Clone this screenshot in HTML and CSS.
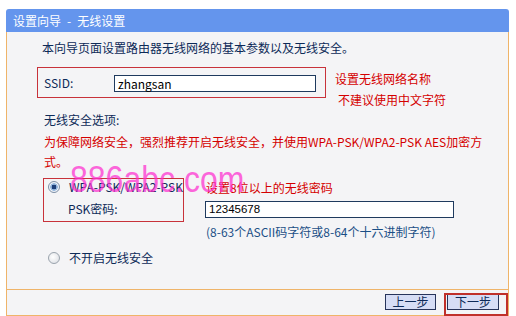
FILE: index.html
```html
<!DOCTYPE html>
<html lang="zh-CN">
<head>
<meta charset="utf-8">
<title>设置向导 - 无线设置</title>
<link rel="stylesheet" href="styles.css">
</head>
<body>
<div class="panel">
  <div class="title">设置向导<span class="dash">-</span>无线设置</div>
  <div class="frame">
    <div class="content">
      <p class="intro">本向导页面设置路由器无线网络的基本参数以及无线安全。</p>
      <div class="ssid-row">
        <div class="ssid-box">
          <span class="label">SSID:</span>
          <div class="input ssid-input">zhangsan</div>
        </div>
        <div class="notes">
          <div class="note">设置无线网络名称</div>
          <div class="note indent">不建议使用中文字符</div>
        </div>
      </div>
      <div class="section-title">无线安全选项:</div>
      <p class="warn">为保障网络安全，强烈推荐开启无线安全，并使用WPA-PSK/WPA2-PSK AES加密方<br>式。</p>
      <div class="wpa-row">
        <div class="wpa-box">
          <div class="opt"><span class="radio checked"></span><span>WPA-PSK/WPA2-PSK</span></div>
          <div class="psk-label">PSK密码:</div>
        </div>
        <div class="wpa-side">
          <div class="note side-note">设置8位以上的无线密码</div>
          <div class="input psk-input">12345678</div>
          <div class="hint">(8-63个ASCII码字符或8-64个十六进制字符)</div>
        </div>
        <div class="watermark">886abc.com</div>
      </div>
      <div class="opt off"><span class="radio"></span><span>不开启无线安全</span></div>
    </div>
    <div class="footer">
      <button class="btn">上一步</button>
      <button class="btn next">下一步</button>
      <div class="highlight"></div>
    </div>
  </div>
</div>
</body>
</html>
```
FILE: styles.css
```css
* { box-sizing: border-box; }
html, body {
  margin: 0;
  padding: 0;
  background: #ffffff;
}
body {
  font-family: "Noto Sans CJK SC", "Noto Sans", sans-serif;
  font-size: 12px;
  color: #0d2a58;
  width: 516px;
  height: 316px;
  overflow: hidden;
}
.panel {
  margin: 9px 0 0 6px;
  width: 503px;
}
.title {
  height: 23px;
  line-height: 23px;
  background: #6495ed;
  color: #ffffff;
  padding-left: 7px;
  border-radius: 3px 3px 0 0;
}
.dash {
  margin: 0 6px;
}
.frame {
  border-left: 1px solid #efb469;
  border-right: 1px solid #efb469;
  border-bottom: 1px solid #efb469;
  background: #f4f4f6;
}
.content {
  height: 257px;
  padding: 6px 0 0 30px;
}
p { margin: 0; }
.intro {
  line-height: 20px;
  margin-left: 5px;
}
.ssid-row {
  display: flex;
  margin-top: 9px;
}
.ssid-box {
  width: 289px;
  height: 31px;
  border: 1px solid #c8323a;
  display: flex;
  align-items: center;
  padding-left: 6px;
}
.label {
  width: 70px;
  line-height: 16px;
}
.input {
  background: #ffffff;
  border: 1px solid #1f3a5e;
  height: 17px;
  line-height: 15px;
  padding-left: 3px;
  color: #000000;
}
.ssid-input {
  width: 202px;
  margin-top: 2px;
}
.notes {
  margin-left: 9px;
  padding-top: 1px;
}
.note {
  color: #d40000;
  line-height: 21px;
}
.indent { padding-left: 3px; }
.section-title {
  line-height: 20px;
  margin-left: 7px;
}
.warn {
  color: #d40000;
  line-height: 20px;
  margin: 2px 0 0 7px;
}
.wpa-row {
  display: flex;
  margin-top: 6px;
  position: relative;
}
.wpa-box {
  margin-left: 6px;
  width: 141px;
  height: 44px;
  border: 1px solid #c8323a;
  padding: 0 0 0 4px;
}
.opt {
  display: flex;
  align-items: center;
  gap: 9px;
  line-height: 16px;
}
.psk-label {
  margin-top: 6px;
  padding-left: 20px;
  line-height: 16px;
}
.radio {
  width: 12px;
  height: 12px;
  border-radius: 50%;
  border: 1px solid #9aa3ad;
  background: radial-gradient(circle at 40% 40%, #ffffff 0%, #e4e6ea 70%, #c9ccd2 100%);
  flex: none;
  position: relative;
}
.radio.checked {
  border-color: #7d8fa6;
  background: radial-gradient(circle, #1d3f7a 0 2.2px, #9bbbe0 2.6px 3.6px, #eef2f8 4px);
}
.wpa-side {
  margin-left: 21px;
}
.side-note {
  line-height: 20px;
  padding-left: 1px;
}
.psk-input {
  margin-top: 3px;
  width: 249px;
  font-family: "Liberation Sans", Arial, sans-serif;
  font-size: 11.5px;
}
.hint {
  margin-top: 4px;
  line-height: 20px;
  color: #1b4f86;
  padding-left: 1px;
}
.watermark {
  position: absolute;
  left: 33px;
  top: -13px;
  font-family: "Liberation Sans", Arial, sans-serif;
  font-size: 32px;
  line-height: 32px;
  color: #ff2fd0;
  opacity: 0.72;
  pointer-events: none;
  white-space: nowrap;
  transform: scaleY(1.15);
  transform-origin: 0 85%;
}
.off {
  margin-top: 6px;
  line-height: 20px;
  padding-left: 11px;
}
.footer {
  position: relative;
  height: 26px;
  border-top: 1px solid #efb469;
  display: flex;
  justify-content: flex-end;
  align-items: flex-start;
  gap: 11px;
  padding: 4px 9px 0 0;
}
.btn {
  font-family: "Noto Sans CJK SC", sans-serif;
  font-size: 12px;
  color: #0d2a58;
  background: #d6ddf5;
  border: 1px solid #27345a;
  width: 51px;
  height: 16px;
  line-height: 14px;
  padding: 0;
  margin: 0;
}
.next { width: 52px; }
.highlight {
  position: absolute;
  left: 437px;
  top: 3px;
  width: 64px;
  height: 23px;
  border: 2px solid #c0302a;
  pointer-events: none;
}
```
